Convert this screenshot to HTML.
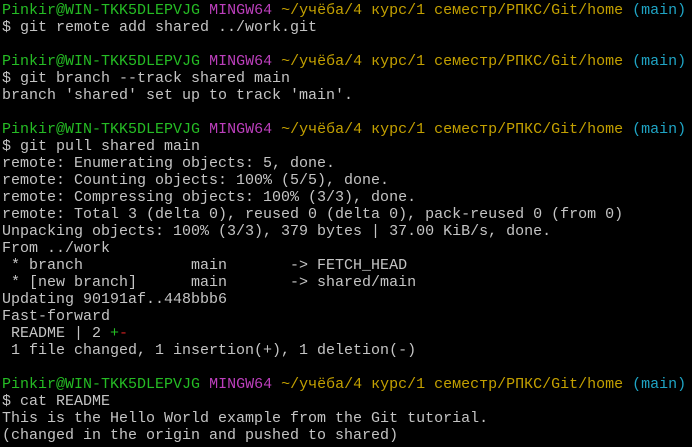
<!DOCTYPE html>
<html><head><meta charset="utf-8"><style>
html,body{margin:0;padding:0;background:#000;width:692px;height:447px;overflow:hidden}
pre{margin:0;padding:2px 0 0 2px;font-family:"Liberation Mono","DejaVu Sans Mono",monospace;font-size:15px;line-height:17px;color:#c4c4c4;white-space:pre}
.g{color:#25bc24}.m{color:#bc3fbc}.y{color:#c3a000}.c{color:#1fa4c4}.r{color:#d02020}
</style></head><body><pre><span class="g">Pinkir@WIN-TKK5DLEPVJG</span> <span class="m">MINGW64</span> <span class="y">~/учёба/4 курс/1 семестр/РПКС/Git/home</span> <span class="c">(main)</span>
$ git remote add shared ../work.git

<span class="g">Pinkir@WIN-TKK5DLEPVJG</span> <span class="m">MINGW64</span> <span class="y">~/учёба/4 курс/1 семестр/РПКС/Git/home</span> <span class="c">(main)</span>
$ git branch --track shared main
branch 'shared' set up to track 'main'.

<span class="g">Pinkir@WIN-TKK5DLEPVJG</span> <span class="m">MINGW64</span> <span class="y">~/учёба/4 курс/1 семестр/РПКС/Git/home</span> <span class="c">(main)</span>
$ git pull shared main
remote: Enumerating objects: 5, done.
remote: Counting objects: 100% (5/5), done.
remote: Compressing objects: 100% (3/3), done.
remote: Total 3 (delta 0), reused 0 (delta 0), pack-reused 0 (from 0)
Unpacking objects: 100% (3/3), 379 bytes | 37.00 KiB/s, done.
From ../work
 * branch            main       -> FETCH_HEAD
 * [new branch]      main       -> shared/main
Updating 90191af..448bbb6
Fast-forward
 README | 2 <span class="g">+</span><span class="r">-</span>
 1 file changed, 1 insertion(+), 1 deletion(-)

<span class="g">Pinkir@WIN-TKK5DLEPVJG</span> <span class="m">MINGW64</span> <span class="y">~/учёба/4 курс/1 семестр/РПКС/Git/home</span> <span class="c">(main)</span>
$ cat README
This is the Hello World example from the Git tutorial.
(changed in the origin and pushed to shared)
</pre></body></html>
